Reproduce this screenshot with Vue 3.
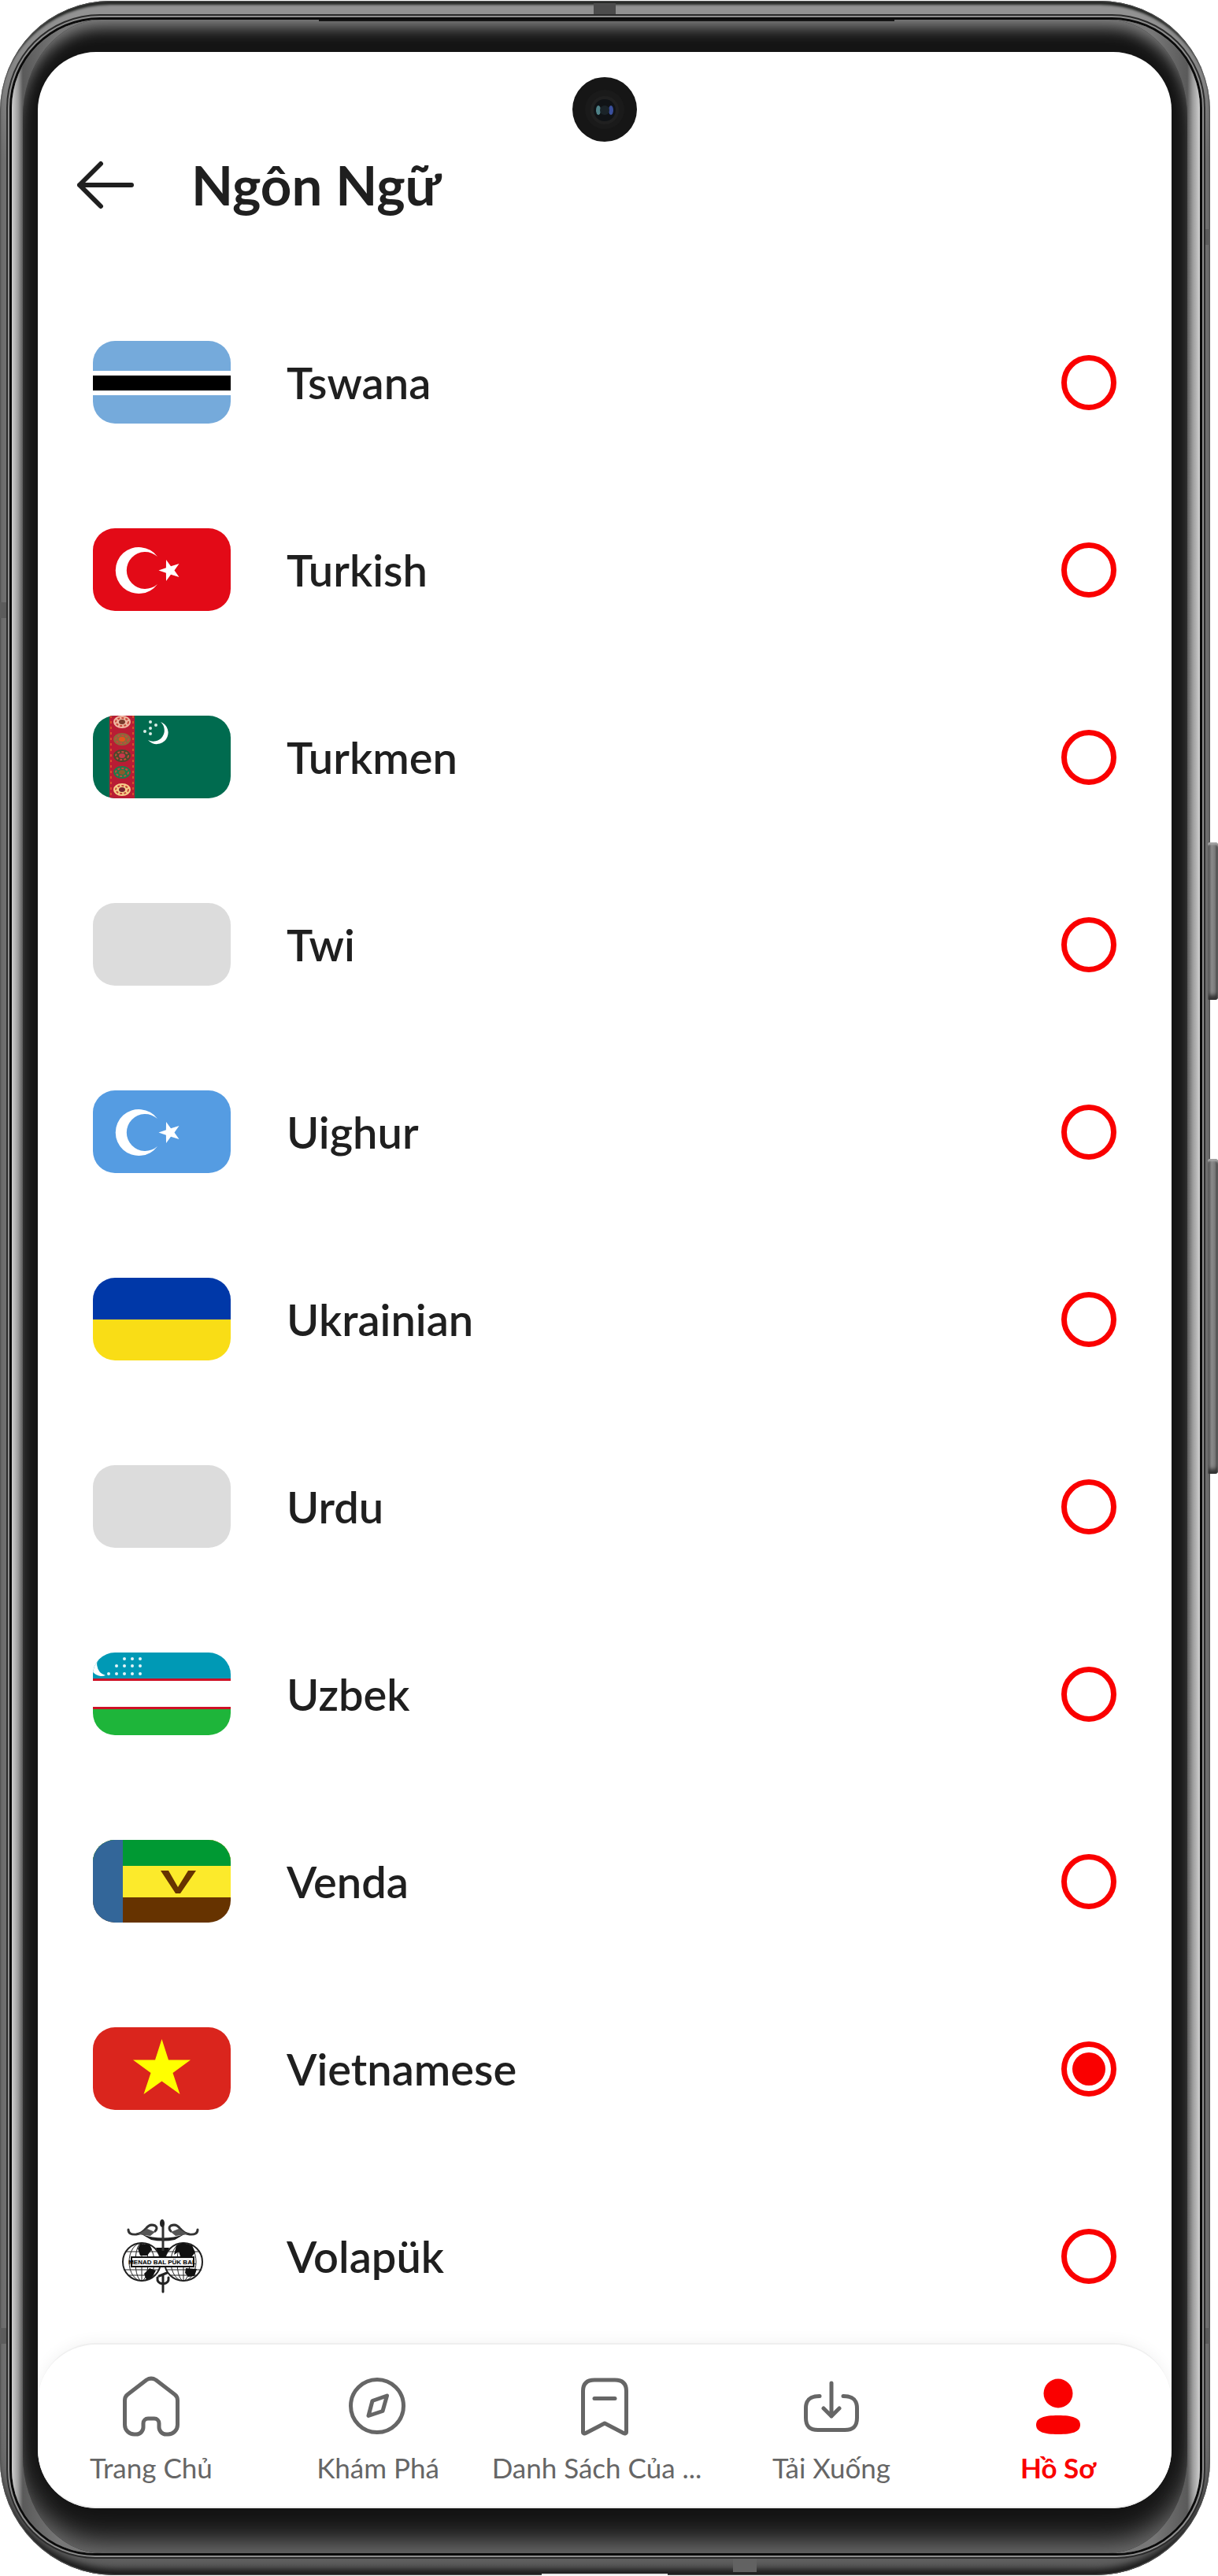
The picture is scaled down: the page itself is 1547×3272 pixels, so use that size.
<script setup>
import { ref } from 'vue'

const languages = [
  { id: 'tn', name: 'Tswana' },
  { id: 'tr', name: 'Turkish' },
  { id: 'tk', name: 'Turkmen' },
  { id: 'tw', name: 'Twi' },
  { id: 'ug', name: 'Uighur' },
  { id: 'uk', name: 'Ukrainian' },
  { id: 'ur', name: 'Urdu' },
  { id: 'uz', name: 'Uzbek' },
  { id: 've', name: 'Venda' },
  { id: 'vi', name: 'Vietnamese' },
  { id: 'vo', name: 'Volapük' }
]
const selected = ref('vi')

const tabs = [
  { id: 'home', label: 'Trang Chủ' },
  { id: 'explore', label: 'Khám Phá' },
  { id: 'list', label: 'Danh Sách Của ...', truncated: true },
  { id: 'download', label: 'Tải Xuống' },
  { id: 'profile', label: 'Hồ Sơ' }
]
const activeTab = 'profile'

const guls = [
  { y: 8, outer: '#f0b7a0', inner: '#7a3a2c' },
  { y: 30, outer: '#8a6a3a', inner: '#e2551c' },
  { y: 51, outer: '#4a4a2c', inner: '#c8384a' },
  { y: 72, outer: '#1f7a4a', inner: '#8a5a2c' },
  { y: 94, outer: '#f6cf8a', inner: '#7a2430' }
]
const uzbekStars = [
  [40, 8], [50, 8], [60, 8],
  [30, 17], [40, 17], [50, 17], [60, 17],
  [20, 27], [30, 27], [40, 27], [50, 27], [60, 27]
]
const turkmenStars = [[73, 8], [80, 12], [73, 16], [66, 20], [73, 23]]
</script>

<template>
  <div class="page">
    <div class="frame">
      <span class="seam seam-top"></span>
      <span class="seam seam-bottom"></span>
      <span class="seam seam-side seam-left-a"></span>
      <span class="seam seam-side seam-right-a"></span>
      <span class="seam seam-side seam-left-b"></span>
      <span class="seam seam-side seam-right-b"></span>
      <span class="port"></span>
      <span class="key key-power"></span>
      <span class="key key-volume"></span>

      <div class="glass">
        <div class="bezel">
          <span class="speaker"></span>
          <main class="screen">
            <span class="camera">
              <svg viewBox="0 0 82 82" aria-hidden="true">
                <circle cx="41" cy="41" r="25" fill="#1a1a1a" />
                <circle cx="41" cy="42" r="18" fill="#202020" />
                <circle cx="41" cy="42" r="14" fill="#101316" />
                <ellipse cx="33" cy="42" rx="3" ry="6" fill="#4f8288" />
                <ellipse cx="49" cy="42" rx="3" ry="6" fill="#3a4f9c" />
                <circle cx="41" cy="42" r="6" fill="#1a2328" />
              </svg>
            </span>

            <header class="header">
              <button class="back" type="button" aria-label="Quay lại">
                <svg viewBox="0 0 84 84" fill="none" stroke="#1f1f1f" stroke-width="6" stroke-linecap="round" stroke-linejoin="round">
                  <path d="M75 42H9M36 15L9 42L36 69" />
                </svg>
              </button>
              <h1>Ngôn Ngữ</h1>
            </header>

            <ul class="languages">
              <li v-for="lang in languages" :key="lang.id">
                <label class="row">
                  <span class="flag">
                    <svg viewBox="0 0 175 105" aria-hidden="true">
                      <g v-if="lang.id === 'tn'">
                        <rect width="175" height="105" fill="#75aadb" />
                        <rect y="38" width="175" height="31" fill="#fff" />
                        <rect y="44" width="175" height="19" fill="#000" />
                      </g>
                      <g v-else-if="lang.id === 'tr' || lang.id === 'ug'">
                        <rect width="175" height="105" :fill="lang.id === 'tr' ? '#e30a17' : '#559ce2'" />
                        <path d="M82 36A29.5 29.5 0 1 0 82 71A23.5 23.5 0 1 1 82 36Z" fill="#fff" />
                        <path d="M83.5 53.5L92.900 50.300L93 40L99 48.200L109.500 45L103.500 53.500L109.500 62L99 58.800L93 67L92.900 56.700Z" fill="#fff" />
                      </g>
                      <g v-else-if="lang.id === 'tk'">
                        <rect width="175" height="105" fill="#006b4f" />
                        <rect x="21" width="32" height="105" fill="#b91c34" />
                        <path d="M23 0V105M51 0V105" stroke="#d2502c" stroke-width="2" stroke-dasharray="3 4" />
                        <g v-for="g in guls" :key="g.y">
                          <ellipse cx="37" :cy="g.y" rx="11" ry="8" :fill="g.outer" />
                          <ellipse cx="37" :cy="g.y" rx="8" ry="5" fill="none" stroke="#c8483a" stroke-width="2" stroke-dasharray="3 2" />
                          <ellipse cx="37" :cy="g.y" rx="4" ry="3" :fill="g.inner" />
                        </g>
                        <path d="M86 8A14.500 14.500 0 1 1 70 31A14.100 14.100 0 0 0 86 8Z" fill="#fff" />
                        <circle v-for="(s, i) in turkmenStars" :key="i" :cx="s[0]" :cy="s[1]" r="2" fill="#d9ece6" />
                      </g>
                      <g v-else-if="lang.id === 'uk'">
                        <rect width="175" height="53" fill="#0038a8" />
                        <rect y="53" width="175" height="52" fill="#f9dd16" />
                      </g>
                      <g v-else-if="lang.id === 'uz'">
                        <rect width="175" height="105" fill="#fff" />
                        <rect width="175" height="34" fill="#0099b5" />
                        <rect y="33" width="175" height="3" fill="#ce1126" />
                        <rect y="69" width="175" height="3" fill="#ce1126" />
                        <rect y="72" width="175" height="33" fill="#1eb53a" />
                        <path d="M12 2A14 14 0 1 0 16 29A15 15 0 0 1 12 2Z" fill="#fff" />
                        <circle v-for="(s, i) in uzbekStars" :key="i" :cx="s[0]" :cy="s[1]" r="2" fill="#e4f5f8" />
                      </g>
                      <g v-else-if="lang.id === 've'">
                        <rect width="175" height="105" fill="#663300" />
                        <rect width="175" height="73" fill="#fcea2b" />
                        <rect width="175" height="33" fill="#009933" />
                        <rect width="38" height="105" fill="#336699" />
                        <polygon points="86,39 96,39 108,60 121,39 131,39 111,68 105,68" fill="#663300" />
                      </g>
                      <g v-else-if="lang.id === 'vi'">
                        <rect width="175" height="105" fill="#da251d" />
                        <path d="M87.500 15L96 41.500H124L101.500 58L110.500 85L87.500 68.500L64.500 85L73.500 58L51 41.500H79Z" fill="#ff0" />
                      </g>
                      <g v-else-if="lang.id === 'vo'">
                        <rect width="175" height="105" fill="#fff" />
                        <g fill="none" stroke="#222" stroke-width="1">
                          <g v-for="cx in [62, 115]" :key="cx">
                            <circle :cx="cx" cy="60" r="24" stroke-width="2" />
                            <ellipse :cx="cx" cy="60" rx="16" ry="24" />
                            <ellipse :cx="cx" cy="60" rx="8" ry="24" />
                            <path :d="`M${cx} 36v48M${cx - 20} 47h40M${cx - 23} 70h46M${cx - 17} 77h34`" />
                          </g>
                        </g>
                        <path d="M60 37l12 1 3 6-6 8h-9l-3-9zM106 39l8-3 12 3 4 9-5 6-14-1-2-6-6 4zM72 68l8 3-5 9-7 3-3-8zM118 68l14 1-3 9-8 1-4-5zM80 42l17 0-5 11h-7z" fill="#111" />
                        <rect x="49" y="54" width="79" height="12" fill="#f4f4f4" stroke="#111" stroke-width="2" />
                        <text x="88" y="63" text-anchor="middle" class="motto">MENAD BAL PÜK BAL</text>
                        <path d="M45 19q0 7 10 6q7-1 12-7q5-7 12-4q4 3 0 7M133 19q0 7-10 6q-7-1-12-7q-5-7-12-4q-4 3 0 7" fill="none" stroke="#333" stroke-width="3" stroke-linecap="round" />
                        <path d="M57 25l12-7 10 4-6 5zM121 25l-12-7-10 4 6 5z" fill="#555" />
                        <path d="M62 25q27 9 54 0l-12 7q-15 3-30 0z" fill="#222" />
                        <path d="M89 10v36" stroke="#333" stroke-width="3" />
                        <ellipse cx="88" cy="11" rx="3" ry="5" fill="#222" />
                        <path d="M89 76v22M82 80q-1 7 7 8q8-1 7-8M84 78l10-4" fill="none" stroke="#222" stroke-width="3" stroke-linecap="round" />
                      </g>
                      <rect v-else width="175" height="105" fill="#dcdcdc" />
                    </svg>
                  </span>
                  <span class="name">{{ lang.name }}</span>
                  <input v-model="selected" type="radio" name="language" :value="lang.id" />
                </label>
              </li>
            </ul>

            <nav class="tabs">
              <a v-for="tab in tabs" :key="tab.id" href="#" :class="{ active: tab.id === activeTab }">
                <svg viewBox="0 0 84 84" fill="none" stroke="currentColor" stroke-width="5" stroke-linecap="round" stroke-linejoin="round" aria-hidden="true">
                  <path v-if="tab.id === 'home'" d="M32 68V63A6 6 0 0 1 38 57H46A6 6 0 0 1 52 63V68A9 9 0 0 0 61 77H63A12 12 0 0 0 75.500 65V34C75.500 31 74 28 72 26.500L48 8C44 5.500 40 5.500 36 8L12 26.500C10 28 8.500 31 8.500 34V65A12 12 0 0 0 21 77H23A9 9 0 0 0 32 68Z" />
                  <template v-else-if="tab.id === 'explore'">
                    <circle cx="41" cy="41" r="33.500" />
                    <path d="M53.500 28L35 34.500L30 53.500L48 47.500Z" />
                  </template>
                  <template v-else-if="tab.id === 'list'">
                    <path d="M14.500 74V22C14.500 12 20 8 29 8H55C64 8 69.500 12 69.500 22V74C69.500 76 67.500 76.500 66 75.500L42 63L18 75.500C16.500 76.500 14.500 76 14.500 74Z" />
                    <path d="M29 31.500H55" />
                  </template>
                  <template v-else-if="tab.id === 'download'">
                    <path d="M27 28.500C15 28.500 9.500 33 9.500 44V56C9.500 67 14 71.500 25 71.500H59C70 71.500 74.500 67 74.500 56V44C74.500 33 69 28.500 57 28.500" />
                    <path d="M42 12V54M32 44L42 54L52 44" />
                  </template>
                  <g v-else fill="currentColor" stroke="none">
                    <circle cx="42" cy="25" r="18.500" />
                    <path d="M42 53C60 53 70 56 70 65C70 74 60 77 42 77C24 77 14 74 14 65C14 56 24 53 42 53Z" />
                  </g>
                </svg>
                <span :class="{ truncated: tab.truncated }">{{ tab.label }}</span>
              </a>
            </nav>
          </main>
        </div>
      </div>
    </div>
  </div>
</template>

<style>
body {
  margin: 0;
  background: #fff;
}
</style>

<style scoped>
.page {
  padding: 1px 10px 1px 0;
  font-family: Lato, "Noto Sans", "Liberation Sans", sans-serif;
  color: #1f1f1f;
}

/* Metal frame */
.frame {
  position: relative;
  padding: 24px 13px 28px 15px;
  border-radius: 140px 140px 146px 146px;
  background: linear-gradient(#929292, #929292 20px, #707070 200px, #707070 calc(100% - 200px), #5c5c5c);
  box-shadow:
    inset 0 0 1px 1px #555,
    inset 0 10px 3px -5px #252725,
    inset 0 -12px 8px -4px #1a1a1a;
}

.seam {
  position: absolute;
  background: #4c4c4c;
}

.seam-top {
  top: 3px;
  left: 754px;
  width: 28px;
  height: 18px;
}

.seam-bottom {
  bottom: 4px;
  left: 931px;
  width: 30px;
  height: 20px;
  background: #626262;
}

.seam-side {
  width: 12px;
  height: 20px;
  background: #5c5c5c;
}

.seam-left-a {
  top: 764px;
  left: 0;
}

.seam-right-a {
  top: 290px;
  right: 0;
}

.seam-left-b {
  bottom: 294px;
  left: 0;
}

.seam-right-b {
  bottom: 294px;
  right: 0;
}

.port {
  position: absolute;
  bottom: 0;
  left: 688px;
  width: 160px;
  height: 2px;
  background: #e8e8e8;
}

.key {
  position: absolute;
  right: -10px;
  width: 13px;
  border-radius: 2px 4px 4px 2px;
  background: linear-gradient(to right, #4a4a4a, #8a8a8a 5px, #7a7a7a 9px, #3c3c3c);
  box-shadow: inset 0 3px 2px #a4a4a4, inset 0 -8px 5px -2px #333;
}

.key-power {
  top: 1069px;
  height: 200px;
}

.key-volume {
  top: 1471px;
  height: 400px;
}

.glass {
  position: relative;
  padding: 0 16px 0 14px;
  border-radius: 112px 112px 106px 106px;
  background: linear-gradient(to right, #cfcfcf, #9c9c9c 8px, #5a5a5a 14px, #777 60px, #777 calc(100% - 60px), #5a5a5a calc(100% - 16px), #9c9c9c calc(100% - 9px), #cfcfcf);
  box-shadow: 0 0 0 3px #0b0b0b, 0 0 0 5px #8e8e8e, 0 0 0 7px #2b2b2b;
}

.bezel {
  position: relative;
  padding: 41px 20px 57px 19px;
  border-radius: 100px / 124px;
  background: #141414;
  box-shadow:
    inset 0 20px 20px -10px #858585,
    inset 0 -32px 34px -17px #727272;
}

.speaker {
  position: absolute;
  top: 0;
  left: 376px;
  right: 372px;
  height: 2px;
  background: #141414;
}

/* Display */
.screen {
  position: relative;
  display: flex;
  flex-direction: column;
  overflow: hidden;
  border-radius: 74px;
  background: #fff;
}

.camera {
  position: absolute;
  top: 32px;
  left: calc(50% - 41px);
  width: 82px;
  height: 82px;
  border-radius: 50%;
  background: #161616;
}

.camera svg {
  display: block;
  width: 82px;
  height: 82px;
}

.header {
  display: flex;
  align-items: center;
  gap: 67px;
  height: 98px;
  padding: 120px 44px 0;
}

.back {
  width: 84px;
  height: 84px;
  padding: 0;
  border: 0;
  background: none;
}

.back svg {
  display: block;
}

h1 {
  margin: 0;
  font-size: 69px;
  line-height: 84px;
  font-weight: 700;
}

.languages {
  display: flex;
  flex-direction: column;
  gap: 133px;
  margin: 0;
  padding: 149px 70px 58px;
  list-style: none;
}

.row {
  display: flex;
  align-items: center;
  gap: 71px;
}

.flag {
  width: 175px;
  height: 105px;
  border-radius: 28px;
  overflow: hidden;
}

.flag svg {
  display: block;
  width: 175px;
  height: 105px;
}

.motto {
  font-family: "Liberation Sans", sans-serif;
  font-size: 8px;
  font-weight: 700;
  fill: #000;
}

.name {
  flex: 1;
  font-size: 56px;
  line-height: 70px;
  font-weight: 600;
}

.row input {
  appearance: none;
  width: 70px;
  height: 70px;
  margin: 0;
  border: 7px solid #fa0000;
  border-radius: 50%;
  background: #fff;
}

.row input:checked {
  padding: 7px;
  background: #fa0000 content-box;
}

.tabs {
  display: flex;
  padding: 37px 0 29px;
  border-top: 2px solid #efefef;
  border-bottom: 2px solid #eee;
  border-radius: 74px;
  background: #fff;
  box-shadow: 0 0 20px rgba(0, 0, 0, 0.06);
}

.tabs a {
  flex: 1 1 0;
  min-width: 0;
  display: flex;
  flex-direction: column;
  align-items: center;
  gap: 14px;
  color: #666;
  font-size: 35px;
  line-height: 42px;
  font-weight: 400;
  text-decoration: none;
  white-space: nowrap;
}

.tabs svg {
  width: 84px;
  height: 84px;
}

.tabs .truncated {
  padding-right: 20px;
}

.tabs a.active {
  color: #fa0000;
  font-weight: 700;
}
</style>
